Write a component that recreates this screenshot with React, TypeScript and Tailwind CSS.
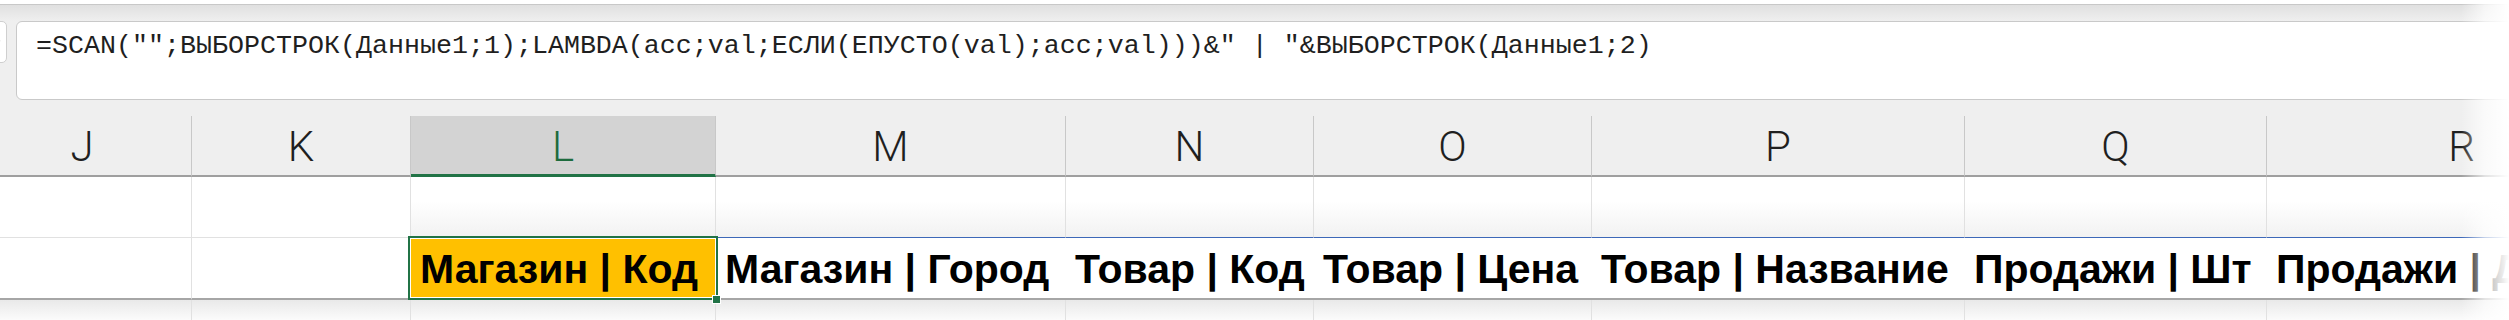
import React from 'react';

interface Col {
  key: string;
  width: string;
  text?: string;
}

const cols: Col[] = [
  { key: 'J', width: 'w-[219px]' },
  { key: 'K', width: 'w-[219px]' },
  { key: 'L', width: 'w-[305px]', text: 'Магазин | Код' },
  { key: 'M', width: 'w-[350px]', text: 'Магазин | Город' },
  { key: 'N', width: 'w-[248px]', text: 'Товар | Код' },
  { key: 'O', width: 'w-[278px]', text: 'Товар | Цена' },
  { key: 'P', width: 'w-[373px]', text: 'Товар | Название' },
  { key: 'Q', width: 'w-[302px]', text: 'Продажи | Шт' },
  { key: 'R', width: 'w-[390px]', text: 'Продажи | Деньги' },
];

const formula =
  '=SCAN("";ВЫБОРСТРОК(Данные1;1);LAMBDA(acc;val;ЕСЛИ(ЕПУСТО(val);acc;val)))&" | "&ВЫБОРСТРОК(Данные1;2)';

export default function App() {
  return (
    <div className="relative w-[2509px] h-[320px] overflow-hidden bg-white">
      {/* formula bar */}
      <div className="bg-[#efefef]">
        <div className="h-[4px] bg-white" />
        <div className="h-[17px] border-t border-[#c8c8c8] bg-gradient-to-b from-[#e0e0e0] to-[#efefef]" />
        <div className="flex h-[79px]">
          <div className="w-[20px] ml-[-13px] h-[42px] rounded-[5px] border border-[#cfcfcf] bg-white flex items-center justify-end pr-[5px]">
            <svg width="8" height="6" viewBox="0 0 8 6" className="text-[#9a9a9a]">
              <path d="M1 1.5 L4 4.5 L7 1.5" fill="none" stroke="currentColor" strokeWidth="1.2" />
            </svg>
          </div>
          <div className="flex-1 ml-[9px] mr-[-20px] rounded-[6px] border border-[#c9c9c9] bg-white pl-[19px] pt-[8px]">
            <div className="font-['Liberation_Mono',monospace] text-[26.67px] leading-[32px] text-[#1f1f1f] whitespace-pre">
              {formula}
            </div>
          </div>
        </div>
        <div className="h-[16px]" />
      </div>

      {/* grid */}
      <div className="ml-[-27px] flex flex-col">
        {/* column headers */}
        <div className="flex bg-[#efefef]">
          {cols.map((c) => (
            <div
              key={c.key}
              className={
                c.key === 'L'
                  ? `${c.width} shrink-0 h-[61px] border-r border-[#c8c8c8] border-b-[3px] border-b-[#217346] bg-[#d3d3d3] pt-[8px] text-center font-['Roboto',sans-serif] font-light text-[42px] leading-[46px] text-[#1d6b3d]`
                  : `${c.width} shrink-0 h-[61px] border-r border-[#c8c8c8] border-b-2 border-b-[#9f9f9f] pt-[8px] text-center font-['Roboto',sans-serif] font-light text-[42px] leading-[46px] text-[#1f1f1f]`
              }
            >
              {c.key}
            </div>
          ))}
        </div>

        {/* row 1 */}
        <div className="flex">
          {cols.map((c, i) => (
            <div
              key={c.key}
              className={
                i < 2
                  ? `${c.width} shrink-0 h-[61px] border-r border-b border-[#e1e1e1] bg-white`
                  : i === 2
                    ? `${c.width} shrink-0 h-[61px] border-r border-b border-[#e1e1e1] bg-gradient-to-b from-white from-40% to-[#f2f2f2]`
                    : `${c.width} shrink-0 h-[61px] border-r border-r-[#e1e1e1] border-b border-b-[#3d68b8] bg-gradient-to-b from-white from-40% to-[#f2f2f2]`
              }
            />
          ))}
        </div>

        {/* row 2 */}
        <div className="relative z-10 flex">
          {cols.map((c, i) => (
            <div
              key={c.key}
              className={
                i < 2
                  ? `${c.width} shrink-0 h-[62px] border-r border-r-[#e1e1e1] border-b-2 border-b-[#a6a6a6] bg-white`
                  : i === 2
                    ? `${c.width} shrink-0 relative h-[62px] border-b-2 border-b-[#a6a6a6] bg-[#ffc000]`
                    : `${c.width} shrink-0 h-[62px] border-b-2 border-b-[#a6a6a6] bg-white`
              }
            >
              {c.text && (
                <div className="pl-[9px] pt-[8px] font-['Liberation_Sans',Arial,sans-serif] font-bold text-[41px] leading-[46px] text-black whitespace-nowrap">
                  {c.text}
                </div>
              )}
              {i === 2 && (
                <>
                  <div className="absolute left-[-3px] top-[-2px] right-[-2px] bottom-[-2px] border-2 border-[#217346] shadow-[inset_0_0_0_1px_white]" />
                  <div className="absolute right-[-5px] bottom-[-6px] w-[9px] h-[9px] bg-[#217346] border border-white" />
                </>
              )}
            </div>
          ))}
        </div>

        {/* row 3 */}
        <div className="flex">
          {cols.map((c) => (
            <div
              key={c.key}
              className={`${c.width} shrink-0 h-[40px] border-r border-[#e1e1e1] bg-gradient-to-b from-[#e9e9e9] to-white to-60%`}
            />
          ))}
        </div>
      </div>

      {/* right edge fade */}
      <div className="absolute inset-y-0 right-0 w-[48px] bg-gradient-to-r from-transparent via-white/70 to-white z-20" />
    </div>
  );
}
